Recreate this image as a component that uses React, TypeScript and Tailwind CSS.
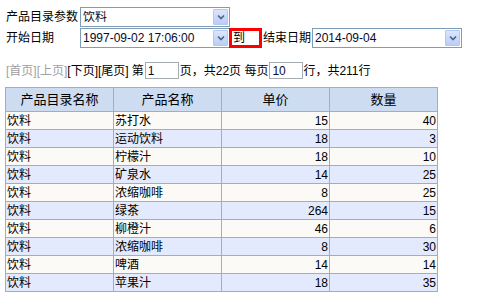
const rows = [
  ["饮料", "苏打水", 15, 40],
  ["饮料", "运动饮料", 18, 3],
  ["饮料", "柠檬汁", 18, 10],
  ["饮料", "矿泉水", 14, 25],
  ["饮料", "浓缩咖啡", 8, 25],
  ["饮料", "绿茶", 264, 15],
  ["饮料", "柳橙汁", 46, 6],
  ["饮料", "浓缩咖啡", 8, 30],
  ["饮料", "啤酒", 14, 14],
  ["饮料", "苹果汁", 18, 35],
];

const Select = ({ value, w }: { value: string; w: string }) => (
  <div className={`${w} h-[20px] border border-[#7f9db9] bg-white flex items-center pl-[2px] pr-[1px]`}>
    <span className="flex-1 truncate text-[#0a0a2a]">{value}</span>
    <span className="w-[15px] h-[16px] border border-[#b4c8f0] rounded-[1px] bg-gradient-to-b from-[#dbe6fd] to-[#b9cdf8] flex items-center justify-center">
      <svg width="8" height="6" viewBox="0 0 8 6">
        <path d="M1 1.5 L4 4.5 L7 1.5" fill="none" stroke="#4d6185" strokeWidth="1.6" />
      </svg>
    </span>
  </div>
);

export default function App() {
  return (
    <div className="w-[484px] h-[294px] bg-white text-black text-[12px] leading-none font-['Liberation_Sans','Noto_Sans_CJK_SC',sans-serif] overflow-hidden">
      <div className="pt-[7px] pl-[6px]">
        <div className="flex items-center h-[20px]">
          <span className="w-[74px]">产品目录参数</span>
          <Select value="饮料" w="w-[150px]" />
        </div>
        <div className="flex items-center h-[20px] mt-[1px]">
          <span className="w-[74px]">开始日期</span>
          <Select value="1997-09-02 17:06:00" w="w-[150px]" />
          <span className="w-[33px] h-[20px] border-[3px] border-[#ff0000] flex items-center -ml-[1px] pl-[1px]">到</span>
          <span className="ml-[1px] w-[49px]">结束日期</span>
          <Select value="2014-09-04" w="w-[150px]" />
        </div>
      </div>

      <div className="flex items-center h-[17px] mt-[14px] pl-[6px]">
        <span className="text-[#a0a0a0]">[首页][上页]</span>
        <span>[下页][尾页]</span>
        <span className="ml-[3px]">第</span>
        <span className="w-[34px] h-[17px] border border-[#a5acb2] ml-[1px] flex items-center pl-[2px] text-[#0a0a2a]">1</span>
        <span className="ml-[1px]">页，共22页 每页</span>
        <span className="w-[34px] h-[17px] border border-[#a5acb2] ml-[1px] flex items-center pl-[2px] text-[#0a0a2a]">10</span>
        <span>行，共211行</span>
      </div>

      <table className="ml-[5px] mt-[8px] w-[433px] table-fixed border-collapse">
        <thead>
          <tr className="bg-[#cddcf0] h-[24px]">
            {["产品目录名称", "产品名称", "单价", "数量"].map((h) => (
              <th key={h} className="border border-[#8cb2e2] font-normal text-center text-[13px] p-0">
                {h}
              </th>
            ))}
          </tr>
        </thead>
        <tbody>
          {rows.map((r, i) => (
            <tr key={i} className={`h-[18px] ${i % 2 === 0 ? "bg-[#fbfaf6]" : "bg-[#e4eafd]"}`}>
              <td className="border border-[#8cb2e2] p-0 pl-[1px] text-left">{r[0]}</td>
              <td className="border border-[#8cb2e2] p-0 pl-[1px] text-left">{r[1]}</td>
              <td className="border border-[#8cb2e2] p-0 pr-[1px] text-right">{r[2]}</td>
              <td className="border border-[#8cb2e2] p-0 pr-[1px] text-right">{r[3]}</td>
            </tr>
          ))}
        </tbody>
      </table>
    </div>
  );
}
